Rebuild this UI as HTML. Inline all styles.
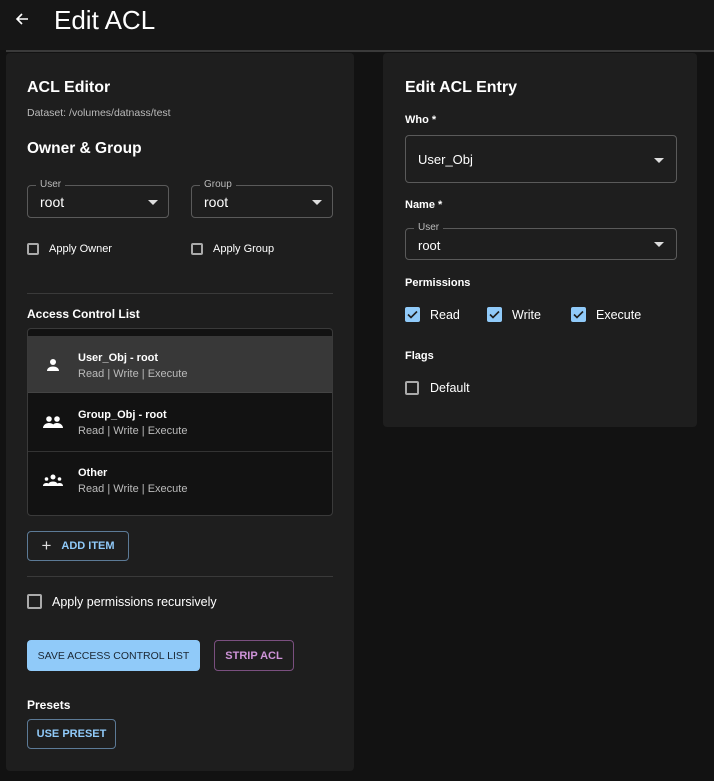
<!DOCTYPE html>
<html><head><style>
*{box-sizing:border-box;margin:0;padding:0}
body{width:714px;height:781px;background:#121212;font-family:"Liberation Sans",sans-serif;color:#fff;position:relative;overflow:hidden}
.a{position:absolute}
.card{position:absolute;background:#1e1e1e;border-radius:4px}
.sel{position:absolute;border:1px solid #5a5a5a;border-radius:4px}
.sel .lab{position:absolute;top:-7px;left:8px;background:#1e1e1e;padding:0 4px;font-size:10px;color:#bbb}
.sel .v{position:absolute;left:12px;font-size:14px}
.arr{position:absolute;width:0;height:0;border-left:5px solid transparent;border-right:5px solid transparent;border-top:5px solid #ddd}
.cb{position:absolute;width:13px;height:13px;border:2px solid #aaa;border-radius:2px}
.cbc{position:absolute;width:15px;height:15px;background:#90caf9;border-radius:2px}
.btn{position:absolute;border-radius:4px;font-size:11px;font-weight:bold;display:flex;align-items:center;justify-content:center}
</style></head><body>
<div class="a" style="left:0;top:0;width:714px;height:50px;background:#161616"></div>
<div class="a" style="left:6px;top:50px;width:708px;height:2px;background:#3a3a3a"></div>
<svg class="a" style="left:14px;top:11px" width="16" height="16" viewBox="0 0 16 16"><path d="M14 8H3M8 3L3 8l5 5" stroke="#fff" stroke-width="1.6" fill="none"/></svg>
<div class="a" style="left:54px;top:5px;font-size:26px">Edit ACL</div>

<div class="card" style="left:6px;top:53px;width:348px;height:718px"></div>
<div class="a" style="left:27px;top:79px;font-size:16px;font-weight:bold">ACL Editor</div>
<div class="a" style="left:27px;top:107px;font-size:10.5px;color:#bbb">Dataset: /volumes/datnass/test</div>
<div class="a" style="left:27px;top:140px;font-size:15.5px;font-weight:bold">Owner &amp; Group</div>
<div class="sel" style="left:27px;top:185px;width:142px;height:33px"><span class="lab">User</span><span class="v" style="top:8px">root</span><span class="arr" style="right:10px;top:14px"></span></div>
<div class="sel" style="left:191px;top:185px;width:142px;height:33px"><span class="lab">Group</span><span class="v" style="top:8px">root</span><span class="arr" style="right:10px;top:14px"></span></div>
<div class="cb" style="left:27px;top:243px;width:12px;height:12px"></div>
<div class="a" style="left:49px;top:243px;font-size:11px">Apply Owner</div>
<div class="cb" style="left:191px;top:243px;width:12px;height:12px"></div>
<div class="a" style="left:213px;top:243px;font-size:11px">Apply Group</div>
<div class="a" style="left:27px;top:293px;width:306px;height:1px;background:#3a3a3a"></div>
<div class="a" style="left:27px;top:307px;font-size:12px;font-weight:bold">Access Control List</div>
<div class="a" style="left:27px;top:328px;width:306px;height:188px;border:1px solid #3a3a3a;border-radius:4px;background:#121212;overflow:hidden">
 <div class="a" style="left:0;top:7px;width:306px;height:57px;background:#383838;border-bottom:1px solid #444"></div>
 <div class="a" style="left:0;top:122px;width:306px;height:1px;background:#333"></div>
 <svg class="a" style="left:17px;top:29px" width="16" height="14" viewBox="0 0 16 14"><circle cx="8" cy="4" r="3" fill="#fff"/><path d="M2 13c0-3 3-4.5 6-4.5s6 1.5 6 4.5z" fill="#fff"/></svg>
 <svg class="a" style="left:15px;top:86px" width="20" height="14" viewBox="0 0 20 14"><circle cx="6" cy="4" r="2.8" fill="#fff"/><circle cx="14" cy="4" r="2.8" fill="#fff"/><path d="M0 13c0-3 3-5 6-5s6 2 6 5zM9 13c0-3 2-5 5-5s6 2 6 5z" fill="#fff"/></svg>
 <svg class="a" style="left:15px;top:145px" width="20" height="12" viewBox="0 0 20 12"><circle cx="10" cy="3" r="2.5" fill="#fff"/><circle cx="3.5" cy="5" r="1.8" fill="#fff"/><circle cx="16.5" cy="5" r="1.8" fill="#fff"/><path d="M5 12c0-3 2-4.5 5-4.5s5 1.5 5 4.5zM0 12c0-2 1.5-3 3.5-3s3 1 3 3zM13.5 12c0-2 1-3 3-3s3.5 1 3.5 3z" fill="#fff"/></svg>
 <div class="a" style="left:50px;top:23px;font-size:11px;font-weight:bold">User_Obj - root</div>
 <div class="a" style="left:50px;top:39px;font-size:11px;color:#bbb">Read | Write | Execute</div>
 <div class="a" style="left:50px;top:80px;font-size:11px;font-weight:bold">Group_Obj - root</div>
 <div class="a" style="left:50px;top:96px;font-size:11px;color:#bbb">Read | Write | Execute</div>
 <div class="a" style="left:50px;top:138px;font-size:11px;font-weight:bold">Other</div>
 <div class="a" style="left:50px;top:154px;font-size:11px;color:#bbb">Read | Write | Execute</div>
</div>
<div class="btn" style="left:27px;top:531px;width:102px;height:30px;border:1px solid #5c7a96;color:#90caf9"><span style="font-size:17px;font-weight:normal;color:#ddd;margin-right:10px">+</span>ADD ITEM</div>
<div class="a" style="left:27px;top:576px;width:306px;height:1px;background:#3a3a3a"></div>
<div class="cb" style="left:27px;top:594px;width:15px;height:15px"></div>
<div class="a" style="left:52px;top:595px;font-size:12.5px">Apply permissions recursively</div>
<div class="btn" style="left:27px;top:640px;width:173px;height:31px;background:#90caf9;color:#1b2733;font-weight:normal;font-size:10.5px">SAVE ACCESS CONTROL LIST</div>
<div class="btn" style="left:214px;top:640px;width:80px;height:31px;border:1px solid #7a4f7f;color:#ce93d8">STRIP ACL</div>
<div class="a" style="left:27px;top:698px;font-size:12px;font-weight:bold">Presets</div>
<div class="btn" style="left:27px;top:719px;width:89px;height:30px;border:1px solid #5c7a96;color:#90caf9">USE PRESET</div>

<div class="card" style="left:383px;top:53px;width:314px;height:374px"></div>
<div class="a" style="left:405px;top:79px;font-size:16px;font-weight:bold">Edit ACL Entry</div>
<div class="a" style="left:405px;top:114px;font-size:11px;font-weight:bold">Who *</div>
<div class="sel" style="left:405px;top:135px;width:272px;height:48px"><span class="v" style="top:16px;font-size:13px">User_Obj</span><span class="arr" style="right:12px;top:22px"></span></div>
<div class="a" style="left:405px;top:199px;font-size:11px;font-weight:bold">Name *</div>
<div class="sel" style="left:405px;top:228px;width:272px;height:32px"><span class="lab">User</span><span class="v" style="top:9px;font-size:13px">root</span><span class="arr" style="right:12px;top:13px"></span></div>
<div class="a" style="left:405px;top:277px;font-size:11px;font-weight:bold">Permissions</div>
<div class="cbc" style="left:405px;top:307px"></div><svg class="a" style="left:405px;top:307px" width="15" height="15"><path d="M3 7.5l3 3 6-6" stroke="#1e1e1e" stroke-width="1.6" fill="none"/></svg>
<div class="a" style="left:430px;top:308px;font-size:12.5px">Read</div>
<div class="cbc" style="left:487px;top:307px"></div><svg class="a" style="left:487px;top:307px" width="15" height="15"><path d="M3 7.5l3 3 6-6" stroke="#1e1e1e" stroke-width="1.6" fill="none"/></svg>
<div class="a" style="left:512px;top:308px;font-size:12.5px">Write</div>
<div class="cbc" style="left:571px;top:307px"></div><svg class="a" style="left:571px;top:307px" width="15" height="15"><path d="M3 7.5l3 3 6-6" stroke="#1e1e1e" stroke-width="1.6" fill="none"/></svg>
<div class="a" style="left:596px;top:308px;font-size:12.5px">Execute</div>
<div class="a" style="left:405px;top:350px;font-size:11px;font-weight:bold">Flags</div>
<div class="cb" style="left:405px;top:381px;width:14px;height:14px"></div>
<div class="a" style="left:430px;top:381px;font-size:12.5px">Default</div>
</body></html>
